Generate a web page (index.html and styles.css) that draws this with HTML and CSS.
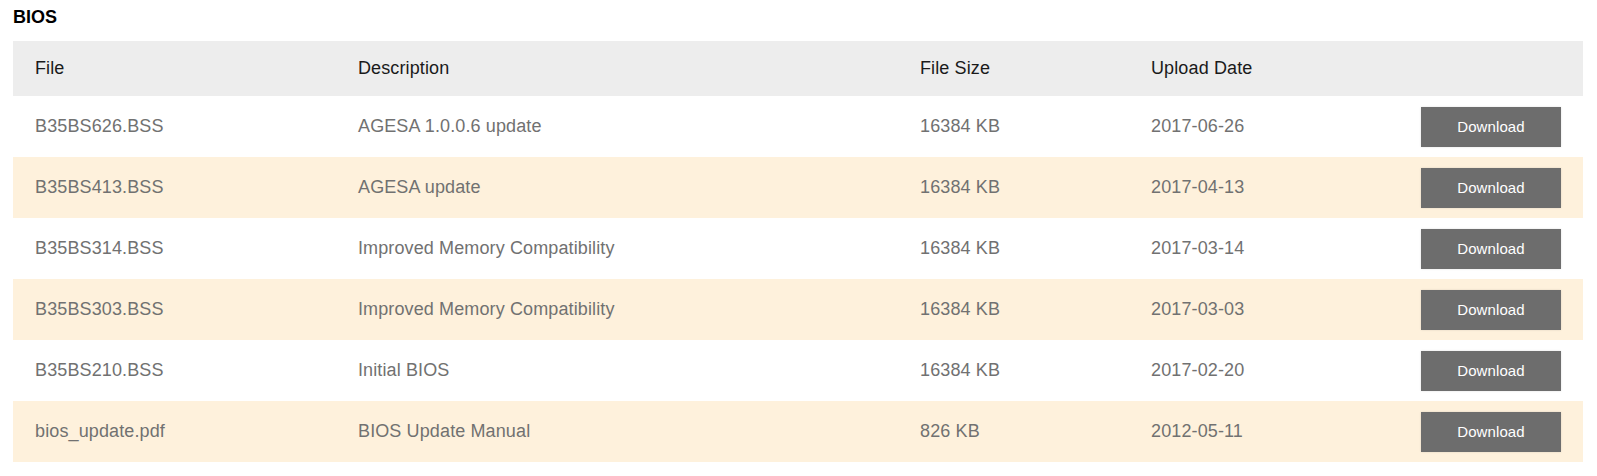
FILE: index.html
```html
<!DOCTYPE html>
<html lang="en">
<head>
<meta charset="utf-8">
<title>BIOS</title>
<link rel="stylesheet" href="styles.css">
</head>
<body>
<div class="page">
  <h2 class="title">BIOS</h2>
  <table class="files">
    <colgroup>
      <col class="c-file"><col class="c-desc"><col class="c-size"><col class="c-date"><col class="c-btn">
    </colgroup>
    <thead>
      <tr><th>File</th><th>Description</th><th>File Size</th><th>Upload Date</th><th></th></tr>
    </thead>
    <tbody>
      <tr><td>B35BS626.BSS</td><td>AGESA 1.0.0.6 update</td><td>16384 KB</td><td>2017-06-26</td><td class="act"><a class="btn" href="#">Download</a></td></tr>
      <tr class="alt"><td>B35BS413.BSS</td><td>AGESA update</td><td>16384 KB</td><td>2017-04-13</td><td class="act"><a class="btn" href="#">Download</a></td></tr>
      <tr><td>B35BS314.BSS</td><td>Improved Memory Compatibility</td><td>16384 KB</td><td>2017-03-14</td><td class="act"><a class="btn" href="#">Download</a></td></tr>
      <tr class="alt"><td>B35BS303.BSS</td><td>Improved Memory Compatibility</td><td>16384 KB</td><td>2017-03-03</td><td class="act"><a class="btn" href="#">Download</a></td></tr>
      <tr><td>B35BS210.BSS</td><td>Initial BIOS</td><td>16384 KB</td><td>2017-02-20</td><td class="act"><a class="btn" href="#">Download</a></td></tr>
      <tr class="alt"><td>bios_update.pdf</td><td>BIOS Update Manual</td><td>826 KB</td><td>2012-05-11</td><td class="act"><a class="btn" href="#">Download</a></td></tr>
    </tbody>
  </table>
</div>
</body>
</html>
```

FILE: styles.css
```css
html, body {
  margin: 0;
  padding: 0;
  background: #ffffff;
  font-family: "Liberation Sans", Arial, sans-serif;
}

.page {
  padding: 7px 14px 0 13px;
}

.title {
  margin: 0 0 14px 0;
  font-size: 18px;
  line-height: 20px;
  font-weight: bold;
  color: #000;
}

.files {
  width: 1570px;
  border-collapse: collapse;
  table-layout: fixed;
  font-size: 18px;
  letter-spacing: 0.12px;
}

.c-file { width: 323px; }
.c-desc { width: 562px; }
.c-size { width: 231px; }
.c-date { width: 231px; }
.c-btn { width: 223px; }

.files th {
  height: 55px;
  padding: 0 0 0 22px;
  text-align: left;
  font-weight: normal;
  color: #1a1a1a;
  background: #ededed;
  vertical-align: middle;
}

.files td {
  height: 61px;
  padding: 0 0 0 22px;
  color: #717171;
  vertical-align: middle;
  white-space: nowrap;
}

.files tr.alt td {
  background: #fef1dc;
}

.files td.act {
  text-align: right;
  padding: 0 22px 0 0;
}

.btn {
  display: inline-block;
  width: 140px;
  height: 40px;
  line-height: 40px;
  text-align: center;
  background: #6d6d6d;
  color: #ffffff;
  font-size: 15px;
  letter-spacing: 0.1px;
  text-decoration: none;
  box-shadow: 0 0 2px rgba(0, 0, 0, 0.12);
  vertical-align: middle;
}
```
